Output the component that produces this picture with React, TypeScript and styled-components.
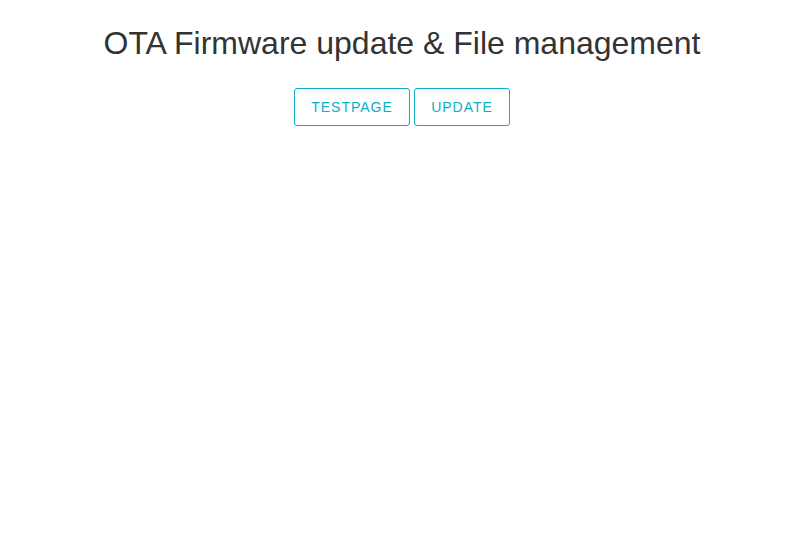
import React from 'react';
import styled, {createGlobalStyle} from 'styled-components';

const GlobalStyle = createGlobalStyle`
	body {
		margin: 0;
		background: #fff;
		font-family: "Liberation Sans", Arial, sans-serif;
	}
`;

const Page = styled.div`
	display: flex;
	flex-direction: column;
	align-items: center;
	padding-top: 23px;
`;

const Title = styled.h1`
	margin: 0;
	font-size: 32px;
	font-weight: 400;
	color: #333;
	line-height: 40px;
`;

const Buttons = styled.div`
	display: flex;
	gap: 4px;
	margin-top: 25px;
`;

const Button = styled.button<{$width: number}>`
	width: ${p => p.$width}px;
	height: 38px;
	padding: 0;
	background: #fff;
	border: 1px solid #0aafc6;
	border-radius: 3px;
	color: #0aafc6;
	font-family: "Liberation Sans", Arial, sans-serif;
	font-size: 14px;
	letter-spacing: 1px;
	text-transform: uppercase;
	cursor: pointer;
`;

const App = (): JSX.Element => (
	<>
		<GlobalStyle/>
		<Page>
			<Title>OTA Firmware update &amp; File management</Title>
			<Buttons>
				<Button $width={116}>Testpage</Button>
				<Button $width={96}>Update</Button>
			</Buttons>
		</Page>
	</>
);

export default App;
